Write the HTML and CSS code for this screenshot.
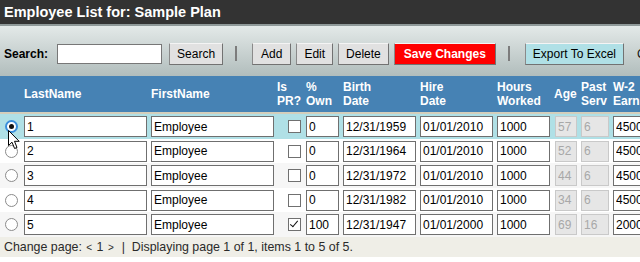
FILE: index.html
```html
<!DOCTYPE html>
<html lang="en">
<head>
<meta charset="UTF-8">
<title>Employee List</title>
<link rel="stylesheet" href="styles.css">
</head>
<body>
<div class="page">
  <div class="titlebar">Employee List for: Sample Plan</div>

  <div class="toolbar">
    <label class="search-label" for="searchBox">Search:</label>
    <input type="text" id="searchBox" class="search-box">
    <button class="btn btn-search">Search</button>
    <span class="sep"></span>
    <button class="btn btn-first">Add</button>
    <button class="btn">Edit</button>
    <button class="btn">Delete</button>
    <button class="btn btn-save">Save Changes</button>
    <span class="sep"></span>
    <button class="btn btn-export">Export To Excel</button>
    <span class="more">Copy Plan</span>
  </div>

  <div class="grid">
    <div class="grid-row grid-head">
      <div></div>
      <div>LastName</div>
      <div>FirstName</div>
      <div>Is<br>PR?</div>
      <div>%<br>Own</div>
      <div>Birth<br>Date</div>
      <div>Hire<br>Date</div>
      <div>Hours<br>Worked</div>
      <div>Age</div>
      <div>Past<br>Serv</div>
      <div>W-2<br>Earn</div>
    </div>

    <div class="grid-row emp-row selected">
      <div><input type="radio" name="pick" class="pick" checked></div>
      <div><input class="cell w-last" value="1"></div>
      <div><input class="cell w-first" value="Employee"></div>
      <div><input type="checkbox" class="chk"></div>
      <div><input class="cell w-own" value="0"></div>
      <div><input class="cell w-date" value="12/31/1959"></div>
      <div><input class="cell w-date" value="01/01/2010"></div>
      <div><input class="cell w-hours" value="1000"></div>
      <div><input class="cell w-age" value="57" disabled></div>
      <div><input class="cell w-past" value="6" disabled></div>
      <div><input class="cell w-w2" value="45000"></div>
    </div>

    <div class="grid-row emp-row">
      <div><input type="radio" name="pick" class="pick"></div>
      <div><input class="cell w-last" value="2"></div>
      <div><input class="cell w-first" value="Employee"></div>
      <div><input type="checkbox" class="chk"></div>
      <div><input class="cell w-own" value="0"></div>
      <div><input class="cell w-date" value="12/31/1964"></div>
      <div><input class="cell w-date" value="01/01/2010"></div>
      <div><input class="cell w-hours" value="1000"></div>
      <div><input class="cell w-age" value="52" disabled></div>
      <div><input class="cell w-past" value="6" disabled></div>
      <div><input class="cell w-w2" value="45000"></div>
    </div>

    <div class="grid-row emp-row alt">
      <div><input type="radio" name="pick" class="pick"></div>
      <div><input class="cell w-last" value="3"></div>
      <div><input class="cell w-first" value="Employee"></div>
      <div><input type="checkbox" class="chk"></div>
      <div><input class="cell w-own" value="0"></div>
      <div><input class="cell w-date" value="12/31/1972"></div>
      <div><input class="cell w-date" value="01/01/2010"></div>
      <div><input class="cell w-hours" value="1000"></div>
      <div><input class="cell w-age" value="44" disabled></div>
      <div><input class="cell w-past" value="6" disabled></div>
      <div><input class="cell w-w2" value="45000"></div>
    </div>

    <div class="grid-row emp-row">
      <div><input type="radio" name="pick" class="pick"></div>
      <div><input class="cell w-last" value="4"></div>
      <div><input class="cell w-first" value="Employee"></div>
      <div><input type="checkbox" class="chk"></div>
      <div><input class="cell w-own" value="0"></div>
      <div><input class="cell w-date" value="12/31/1982"></div>
      <div><input class="cell w-date" value="01/01/2010"></div>
      <div><input class="cell w-hours" value="1000"></div>
      <div><input class="cell w-age" value="34" disabled></div>
      <div><input class="cell w-past" value="6" disabled></div>
      <div><input class="cell w-w2" value="45000"></div>
    </div>

    <div class="grid-row emp-row alt">
      <div><input type="radio" name="pick" class="pick"></div>
      <div><input class="cell w-last" value="5"></div>
      <div><input class="cell w-first" value="Employee"></div>
      <div><input type="checkbox" class="chk" checked></div>
      <div><input class="cell w-own" value="100"></div>
      <div><input class="cell w-date" value="12/31/1947"></div>
      <div><input class="cell w-date" value="01/01/2000"></div>
      <div><input class="cell w-hours" value="1000"></div>
      <div><input class="cell w-age" value="69" disabled></div>
      <div><input class="cell w-past" value="16" disabled></div>
      <div><input class="cell w-w2" value="20000"></div>
    </div>
  </div>

  <div class="pager">
    Change page: <span class="arrow">&lt;</span> 1 <span class="arrow">&gt;</span> &nbsp;|&nbsp; Displaying page 1 of 1, items 1 to 5 of 5.
  </div>

  <!-- mouse pointer over the first row -->
  <svg class="pointer" width="13" height="20" viewBox="0 0 13 20">
    <path d="M0.5 0.5 L0.5 15.5 L4 12.2 L6.6 18.5 L9 17.5 L6.5 11.3 L11.2 11.3 Z" fill="#fff" stroke="#000" stroke-width="1" stroke-linejoin="round"/>
  </svg>
</div>
</body>
</html>
```

FILE: styles.css
```css
body {
    margin: 0;
    font-family: "Liberation Sans", Arial, sans-serif;
    font-size: 12px;
    color: #000;
    background-color: #fff;
    overflow: hidden;
}

.page {
    width: 720px;
    position: relative;
}

/* title bar */
.titlebar {
    height: 24px;
    line-height: 25px;
    padding-left: 4px;
    background-color: #333;
    color: #fff;
    font-weight: bold;
    font-size: 14.5px;
    border-bottom: 2px solid #8f9999;
}

/* toolbar */
.toolbar {
    display: flex;
    align-items: center;
    height: 45px;
    padding: 5px 0 0 4px;
    background: linear-gradient(#e3e9e8, #b1bdbc);
    white-space: nowrap;
}

.search-label {
    font-weight: bold;
}

.search-box {
    width: 105px;
    height: 20px;
    box-sizing: border-box;
    margin-left: 9px;
    border: 1px solid #777;
    background-color: #fff;
}

.btn {
    height: 22px;
    padding: 0 7px;
    margin-left: 5px;
    font-family: "Liberation Sans", Arial, sans-serif;
    font-size: 12px;
    color: #000;
    background-color: #e1e1e1;
    border: 1px solid #727272;
    border-top-color: #f4f4f4;
    border-left-color: #8a8a8a;
}

.btn-search {
    margin-left: 7px;
}

.btn-first {
    margin-left: 0;
    padding: 0 8px;
}

.btn-save {
    padding: 0 9px;
    background-color: #ff0000;
    color: #fff;
    font-weight: bold;
}

.btn-export {
    margin-left: 0;
    background-color: #b0e0e6;
}

.sep {
    display: inline-block;
    width: 2px;
    height: 15px;
    background-color: #7c7c7c;
    margin: 0 15px 0 12px;
}

.more {
    margin-left: 13px;
    color: #111;
}

/* grid */
.grid-row {
    display: grid;
    grid-template-columns: 24px 127px 126px 29px 37px 77px 77px 57px 27px 32px 80px;
    align-items: center;
}

.grid-head {
    height: 36px;
    background-color: #4682b4;
    color: #fff;
    font-weight: bold;
    line-height: 14px;
    border-bottom: 2px solid #d4cebb;
}

.emp-row {
    height: 24.5px;
    background-color: #fff;
}

.emp-row.selected {
    background-color: #b0e0e6;
}

.emp-row.alt {
    background-color: #f6f6f6;
}

.emp-row > div {
    display: flex;
    align-items: center;
    padding-top: 1px;
}

.cell {
    height: 21px;
    box-sizing: border-box;
    margin: 0;
    padding: 0 2px;
    border: 1px solid #6f6f6f;
    background-color: #fff;
    font-family: "Liberation Sans", Arial, sans-serif;
    font-size: 12px;
    color: #000;
}

.cell:disabled {
    background-color: #e6e6e6;
    border-color: #c9c9c9;
    color: #a8a8a8;
}

.w-last, .w-first { width: 123px; }
.w-own { width: 33px; }
.w-date { width: 73px; }
.w-hours { width: 53px; }
.w-age { width: 22px; margin-left: 1px; }
.w-past { width: 28px; }
.w-w2 { width: 70px; }

/* radio + checkbox */
.pick {
    appearance: none;
    width: 13px;
    height: 13px;
    margin: 0 0 0 5px;
    border: 1px solid #8b8b8b;
    border-radius: 50%;
    background-color: #fff;
    position: relative;
}

.pick:checked {
    border: 2px solid #3a8edb;
}

.pick:checked::after {
    content: "";
    position: absolute;
    top: 2px;
    left: 2px;
    width: 5px;
    height: 5px;
    border-radius: 50%;
    background-color: #111;
}

.chk {
    appearance: none;
    width: 13px;
    height: 13px;
    margin: 0 0 0 11px;
    border: 1px solid #707070;
    background-color: #fff;
    position: relative;
}

.chk:checked::after {
    content: "";
    position: absolute;
    left: 3px;
    top: 0px;
    width: 3px;
    height: 7px;
    border: solid #111;
    border-width: 0 1.5px 1.5px 0;
    transform: rotate(40deg);
}

/* pager */
.pager {
    height: 20px;
    line-height: 20px;
    padding-left: 4px;
    background-color: #efeee7;
    color: #2a2a2a;
    font-size: 12.4px;
}

.arrow {
    font-size: 10px;
    margin: 0 1px;
}

.pointer {
    position: absolute;
    left: 8px;
    top: 130px;
}
```
